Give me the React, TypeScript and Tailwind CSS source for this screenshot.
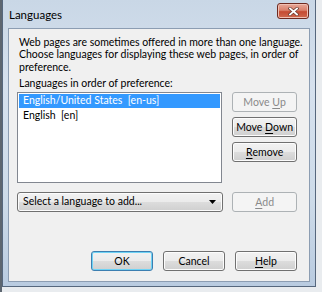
import React from 'react';

type BtnProps = {
  children: React.ReactNode;
  disabled?: boolean;
  primary?: boolean;
  className?: string;
};

const WinButton: React.FC<BtnProps> = ({ children, disabled, primary, className = '' }) => {
  const look = disabled
    ? 'border-[#adb2b5] bg-[#f4f4f4] text-[#8a8a8a]'
    : primary
    ? 'border-[#3c7fb1] bg-[linear-gradient(to_bottom,#f2f2f2_0%,#ebebeb_50%,#dddddd_50%,#cfcfcf_100%)] text-black shadow-[inset_0_0_0_1px_#6fd3f5]'
    : 'border-[#707070] bg-[linear-gradient(to_bottom,#f2f2f2_0%,#ebebeb_50%,#dddddd_50%,#cfcfcf_100%)] text-black shadow-[inset_0_0_0_1px_#fcfcfc]';
  return (
    <div className={`flex h-[20px] items-center justify-center rounded-[3px] border text-[10.5px] leading-none ${look} ${className}`}>
      {children}
    </div>
  );
};

const U: React.FC<{ children: React.ReactNode }> = ({ children }) => (
  <span className="underline underline-offset-[2px]">{children}</span>
);

export default function App() {
  return (
    <div className="h-[292px] w-[322px] overflow-hidden bg-[linear-gradient(to_right,#5d6670_0px,#5d6670_2px,#e9ecef_2px)] font-['Segoe_UI',Lato,'Noto_Sans',sans-serif] text-black">
      <div className="ml-[2px] flex h-[287px] w-[314px] flex-col border-x border-b border-[#56677d] bg-[linear-gradient(to_bottom,#c9d7e6_0%,#d6e1ee_30%,#cddbe9_70%,#b9cbe0_100%)] px-[5px] pb-[4px]">
        {/* title bar */}
        <div className="flex h-[28px] shrink-0 items-center justify-between">
          <span className="pl-[1px] pt-[1px] text-[11.5px] text-black">Languages</span>
          <div className="mr-[1px] mt-[3px] flex h-[16px] w-[32px] items-center justify-center self-start rounded-[3px] border border-[#6e2a20] bg-[linear-gradient(to_bottom,#e8a899_0%,#d9806b_45%,#c54a32_55%,#d06a4f_100%)] shadow-[inset_0_0_0_1px_#f0bfb2]">
            <svg width="11" height="9" viewBox="0 0 11 9">
              <path d="M2 1.5 L9 7.5 M9 1.5 L2 7.5" stroke="#6a3a30" strokeWidth="3.2" strokeLinecap="square" />
              <path d="M2 1.5 L9 7.5 M9 1.5 L2 7.5" stroke="#ffffff" strokeWidth="1.8" strokeLinecap="square" />
            </svg>
          </div>
        </div>

        {/* client area */}
        <div className="flex flex-1 flex-col border border-[#8c9db2] bg-[#f0f0f0] pl-[8px] pr-[12px] pt-[7px]">
          <p className="whitespace-nowrap pl-[2px] text-[10.5px] leading-[12.3px]">
            Web pages are sometimes offered in more than one language.
            <br />
            Choose languages for displaying these web pages, in order of
            <br />
            preference.
          </p>
          <p className="mt-[4px] pl-[2px] text-[10.5px] leading-[12px]">Languages in order of preference:</p>

          <div className="mt-[3px] flex gap-[10px]">
            <div className="h-[91px] w-[206px] border border-[#828790] bg-white p-[1px] text-[10.5px]">
              <div className="flex h-[14px] items-center bg-[#3399ff] pl-[4px] text-white">
                English/United States&nbsp;&nbsp;[en-us]
              </div>
              <div className="flex h-[15px] items-center pl-[4px]">English&nbsp;&nbsp;[en]</div>
            </div>
            <div className="flex w-[65px] flex-col gap-[5px]">
              <WinButton disabled>
                Move&nbsp;<U>U</U>p
              </WinButton>
              <WinButton>
                Move&nbsp;<U>D</U>own
              </WinButton>
              <WinButton>
                <U>R</U>emove
              </WinButton>
            </div>
          </div>

          <div className="mt-[9px] flex gap-[9px]">
            <div className="flex h-[20px] w-[207px] items-center justify-between rounded-[3px] border border-[#707070] bg-[linear-gradient(to_bottom,#f2f2f2_0%,#ebebeb_50%,#dddddd_50%,#cfcfcf_100%)] pl-[5px] pr-[6px] text-[10.5px] shadow-[inset_0_0_0_1px_#fcfcfc]">
              <span>Select a language to add...</span>
              <svg width="7" height="4" viewBox="0 0 7 4">
                <path d="M0 0 H7 L3.5 4 Z" fill="#000" />
              </svg>
            </div>
            <WinButton disabled className="w-[65px]">
              <U>A</U>dd
            </WinButton>
          </div>

          <div className="mt-[39px] flex justify-end gap-[10px]">
            <WinButton primary className="w-[62px]">
              OK
            </WinButton>
            <WinButton className="w-[62px]">Cancel</WinButton>
            <WinButton className="w-[62px]">
              <U>H</U>elp
            </WinButton>
          </div>
        </div>
      </div>
    </div>
  );
}
